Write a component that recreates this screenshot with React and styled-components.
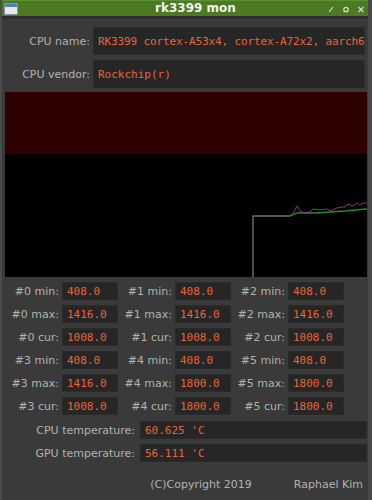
import React from "react";
import styled, { createGlobalStyle } from "styled-components";

const GlobalStyle = createGlobalStyle`
  html, body {
    margin: 0;
    padding: 0;
    background: #3a3a3a;
  }
  * {
    box-sizing: border-box;
  }
`;

const CORES = [
  [
    { id: 0, min: "408.0", max: "1416.0", cur: "1008.0" },
    { id: 1, min: "408.0", max: "1416.0", cur: "1008.0" },
    { id: 2, min: "408.0", max: "1416.0", cur: "1008.0" }
  ],
  [
    { id: 3, min: "408.0", max: "1416.0", cur: "1008.0" },
    { id: 4, min: "408.0", max: "1800.0", cur: "1800.0" },
    { id: 5, min: "408.0", max: "1800.0", cur: "1800.0" }
  ]
];

const GREEN_LINE =
  "248,185 248,124 285,124 292,121 310,121 340,119 350,118 362,117";
const PURPLE_LINE =
  "248,185 248,124 285,124 289,120 292,114 296,120 301,121 305,120 308,117 315,118 322,117 325,119 332,116 337,115 340,115 343,112 347,114 352,111 355,113 358,111 362,111";

const StyledWindow = styled.div`
  width: 372px;
  height: 500px;
  display: flex;
  flex-direction: column;
  background: #3a3a3a;
  border-left: 2px solid #4c4c4c;
  border-right: 4px solid #484848;
  font-family: "DejaVu Sans", "Liberation Sans", sans-serif;
  overflow: hidden;
`;

const StyledTitleBar = styled.div`
  height: 19px;
  flex-shrink: 0;
  display: flex;
  align-items: center;
  background: #4b7a22;
  border-top: 1px solid #5e8f34;
  border-bottom: 3px solid #2e2e2e;
  padding: 0 3px 0 1px;
`;

const StyledTitle = styled.div`
  flex: 1;
  text-align: center;
  padding-left: 45px;
  color: #f2f2f2;
  font-weight: bold;
  font-size: 12px;
  line-height: 15px;
`;

const StyledTitleButtons = styled.div`
  display: flex;
  align-items: center;
  gap: 7px;
`;

const StyledBody = styled.div`
  flex: 1;
  display: flex;
  flex-direction: column;
  padding: 8px 1px 0 3px;
`;

const StyledInfoRow = styled.div`
  display: grid;
  grid-template-columns: 85px 1fr;
  column-gap: 3px;
  align-items: center;
  height: 28px;
  margin-bottom: ${p => p.$gap}px;
  padding-right: 2px;
`;

const StyledLabel = styled.div`
  text-align: right;
  color: #b2b2b2;
  font-size: 11px;
  white-space: nowrap;
`;

const StyledField = styled.div`
  height: 100%;
  display: flex;
  align-items: center;
  padding-left: 4px;
  background: #262626;
  border: 1px solid #2b2b2b;
  color: #ea6438;
  font-family: "DejaVu Sans Mono", "Liberation Mono", monospace;
  font-size: 11px;
  letter-spacing: ${p => (p.$tight ? "-0.12px" : "0")};
  white-space: nowrap;
  overflow: hidden;
`;

const StyledChart = styled.div`
  height: 185px;
  flex-shrink: 0;
  display: flex;
  flex-direction: column;
  background: #000;
  margin-bottom: 5px;
  position: relative;
`;

const StyledChartWarn = styled.div`
  height: 62px;
  background: #2e0000;
`;

const StyledChartLines = styled.svg`
  position: absolute;
  inset: 0;
  width: 100%;
  height: 100%;
`;

const StyledCoreGrid = styled.div`
  display: grid;
  grid-template-columns: repeat(3, 113px);
  row-gap: 5px;
  margin-bottom: 6px;
`;

const StyledCoreCell = styled.div`
  display: grid;
  grid-template-columns: 54px 56px;
  column-gap: 3px;
  align-items: center;
  height: 18px;
`;

const StyledTempRow = styled.div`
  display: grid;
  grid-template-columns: 130px 1fr;
  column-gap: 5px;
  align-items: center;
  height: 18px;
  margin-bottom: 5px;
`;

const StyledFooter = styled.div`
  display: flex;
  justify-content: flex-end;
  gap: 42px;
  padding: 11px 4px 0 0;
  color: #b2b2b2;
  font-size: 11px;
  line-height: 14px;
`;

function WindowIcon() {
  return (
    <svg width="16" height="14" viewBox="0 0 16 14">
      <rect x="1.5" y="1.5" width="13" height="11" fill="#e8e8ea" stroke="#8a8f99" />
      <rect x="2" y="2" width="12" height="3" fill="#4f7fc8" />
    </svg>
  );
}

function TitleButtons() {
  return (
    <StyledTitleButtons>
      <svg width="8" height="8" viewBox="0 0 8 8">
        <line x1="2" y1="7" x2="6" y2="2" stroke="#d8d8d8" strokeWidth="1.2" />
      </svg>
      <svg width="8" height="8" viewBox="0 0 8 8">
        <circle cx="4" cy="4.5" r="2.2" fill="none" stroke="#d8d8d8" strokeWidth="1.3" />
      </svg>
      <svg width="8" height="8" viewBox="0 0 8 8">
        <path d="M1.5 2 L6.5 7 M6.5 2 L1.5 7" stroke="#d8d8d8" strokeWidth="1.2" />
      </svg>
    </StyledTitleButtons>
  );
}

function CoreRows({ cores }) {
  return ["min", "max", "cur"].map(kind =>
    cores.map(core => (
      <StyledCoreCell key={kind + core.id}>
        <StyledLabel>{`#${core.id} ${kind}:`}</StyledLabel>
        <StyledField>{core[kind]}</StyledField>
      </StyledCoreCell>
    ))
  );
}

export default function App() {
  return (
    <StyledWindow>
      <GlobalStyle />
      <StyledTitleBar>
        <WindowIcon />
        <StyledTitle>rk3399 mon</StyledTitle>
        <TitleButtons />
      </StyledTitleBar>
      <StyledBody>
        <StyledInfoRow $gap={5}>
          <StyledLabel>CPU name:</StyledLabel>
          <StyledField $tight>RK3399 cortex-A53x4, cortex-A72x2, aarch64</StyledField>
        </StyledInfoRow>
        <StyledInfoRow $gap={4}>
          <StyledLabel>CPU vendor:</StyledLabel>
          <StyledField>Rockchip(r)</StyledField>
        </StyledInfoRow>
        <StyledChart>
          <StyledChartWarn />
          <StyledChartLines viewBox="0 0 362 185" preserveAspectRatio="none">
            <polyline points={GREEN_LINE} fill="none" stroke="#1c8f1c" strokeWidth="1.3" />
            <polyline points={PURPLE_LINE} fill="none" stroke="#a23aa8" strokeWidth="1" opacity="0.85" />
          </StyledChartLines>
        </StyledChart>
        <StyledCoreGrid>
          {CORES.map((group, i) => (
            <CoreRows key={i} cores={group} />
          ))}
        </StyledCoreGrid>
        <StyledTempRow>
          <StyledLabel>CPU temperature:</StyledLabel>
          <StyledField>60.625 'C</StyledField>
        </StyledTempRow>
        <StyledTempRow>
          <StyledLabel>GPU temperature:</StyledLabel>
          <StyledField>56.111 'C</StyledField>
        </StyledTempRow>
        <StyledFooter>
          <span>(C)Copyright 2019</span>
          <span>Raphael Kim</span>
        </StyledFooter>
      </StyledBody>
    </StyledWindow>
  );
}
